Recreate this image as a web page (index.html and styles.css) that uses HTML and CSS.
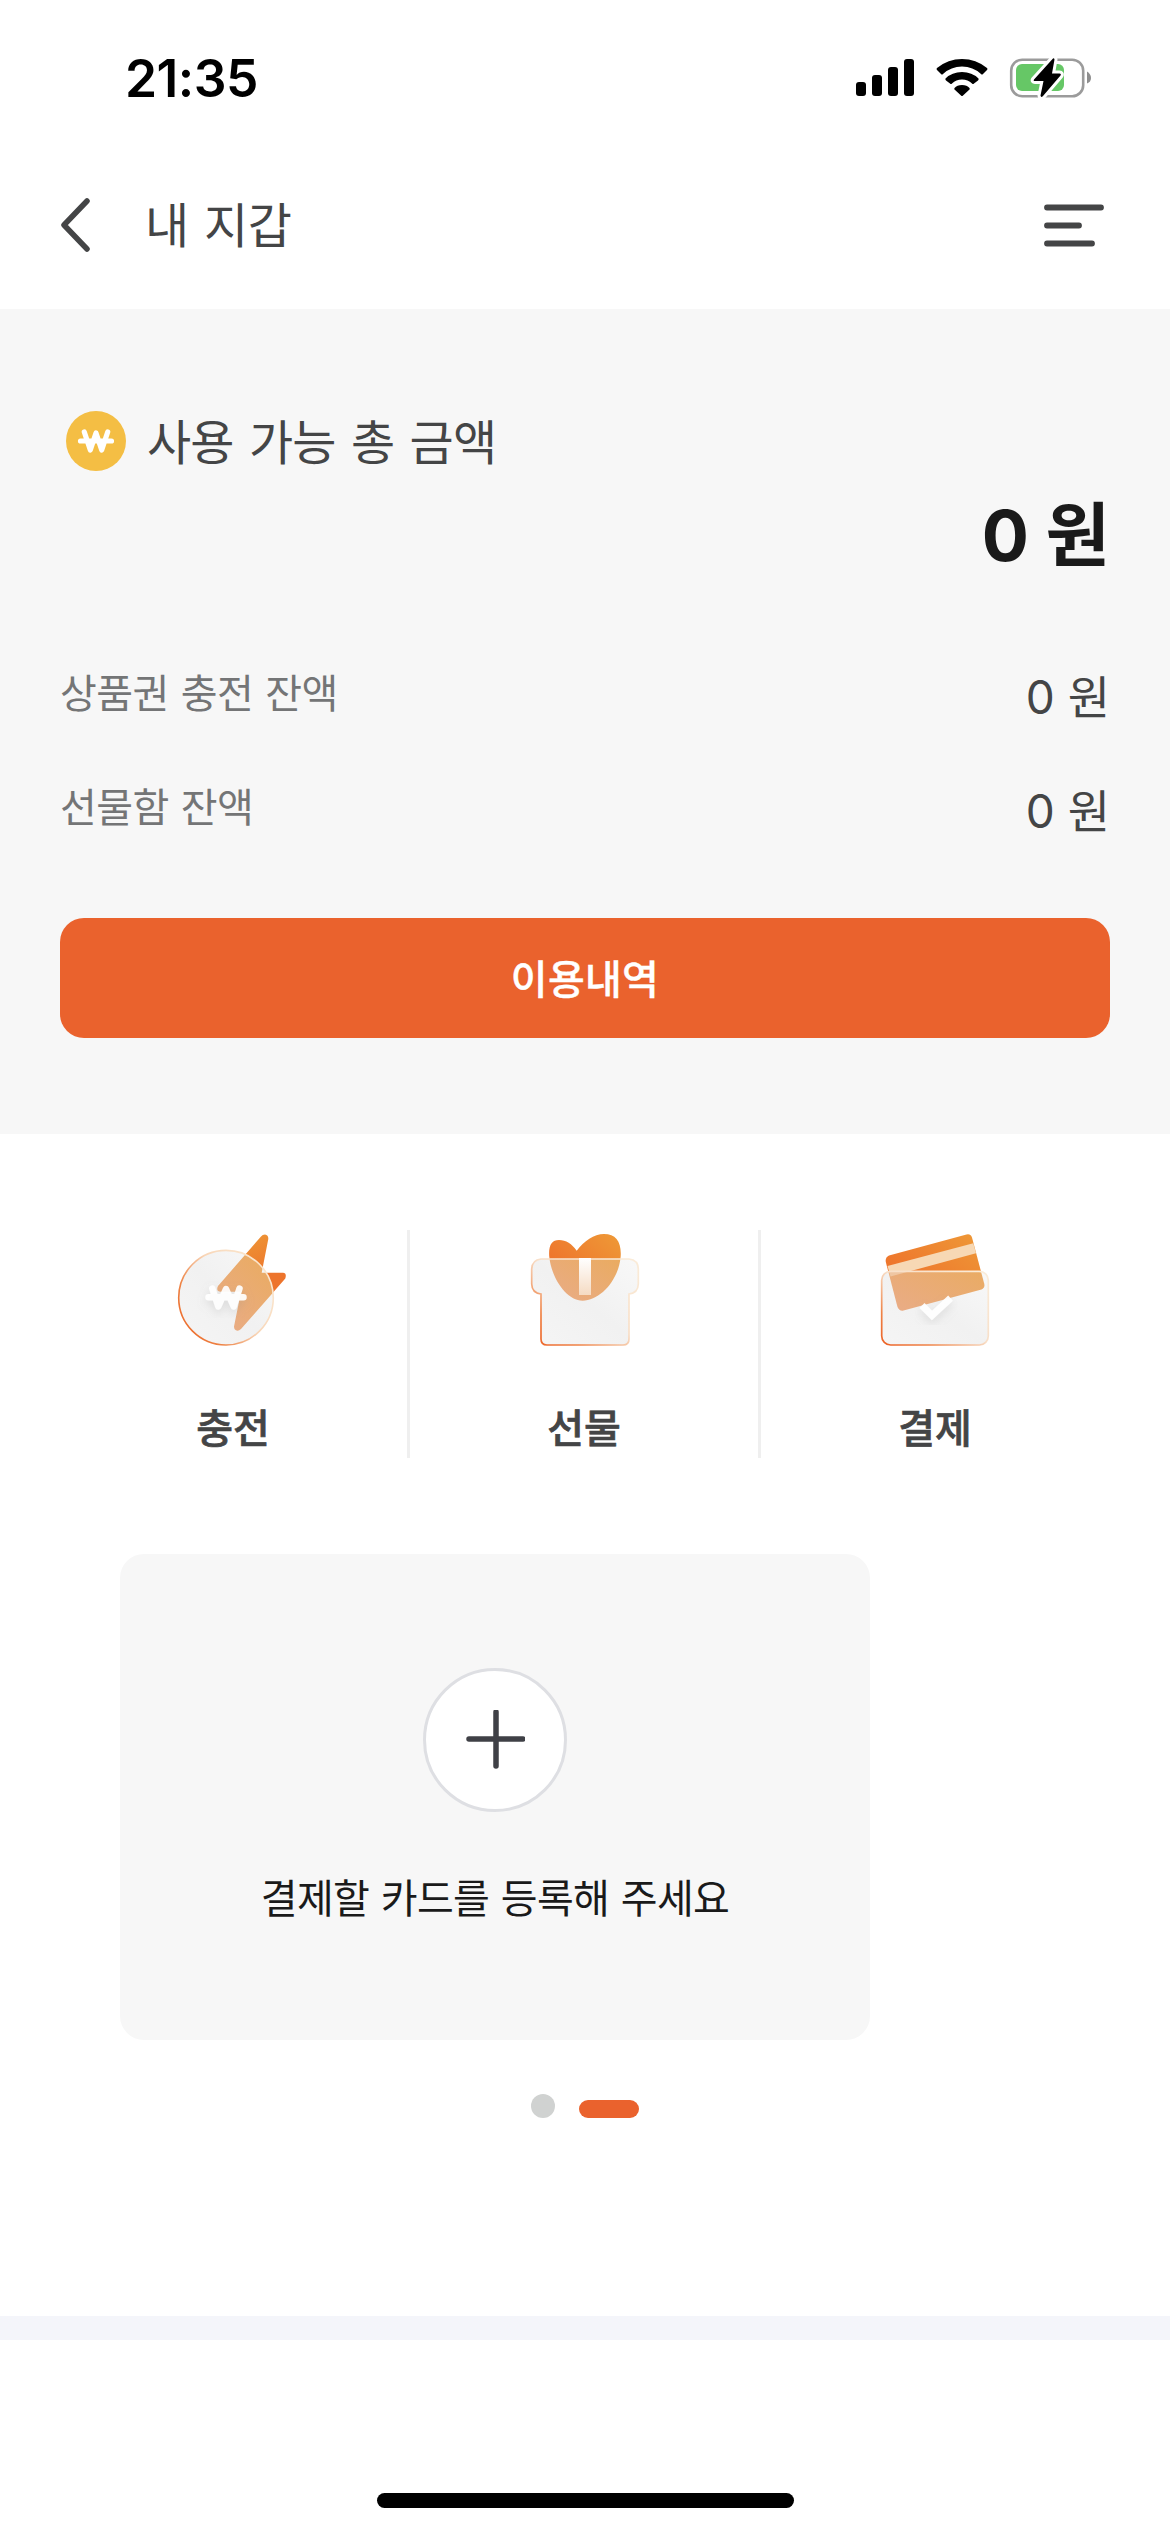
FILE: index.html
```html
<!DOCTYPE html>
<html lang="ko">
<head>
<meta charset="utf-8">
<title>내 지갑</title>
<link rel="stylesheet" href="styles.css">
</head>
<body>
<div class="status">
  <span class="time">21:35</span>
  <svg class="signal" width="58" height="38" viewBox="0 0 58 38"><rect x="0" y="23" width="10" height="14" rx="3"/><rect x="16" y="16" width="10" height="21" rx="3"/><rect x="32" y="8" width="10" height="29" rx="3"/><rect x="48" y="0" width="10" height="37" rx="3"/></svg>
  <svg class="wifi" width="52" height="38" viewBox="0 0 52 38">
    <path d="M1 11Q0 10 1 9Q12 0 26 0T51 9Q52 10 51 11L47 15Q46 16 45 15Q37 7.500 26 7.500T7 15Q6 16 5 15ZM9.500 19.500Q16 13 26 13T42.500 19.500Q43 20.500 42 21.500L38 24.500Q37 25.500 36 24.500Q32 20.500 26 20.500T16 24.500Q15 25.500 14 24.500L10 21.500Q9 20.500 9.500 19.500ZM18.500 29Q21 26 26 26T33.500 29Q34 30 33.500 30.500L27 36.500Q26 37.500 25 36.500L18.500 30.500Q18 30 18.500 29Z"/>
  </svg>
  <svg class="battery" width="84" height="42" viewBox="0 0 84 42">
    <rect x="2.200" y="2.700" width="72" height="36.500" rx="11" fill="none" stroke="#9b9b9b" stroke-width="2.600"/>
    <rect x="7" y="7" width="48" height="27" rx="6" fill="#66c766"/>
    <path d="M78 14.500Q82 17 82 21T78 26.500Z" fill="#8e8e8e"/>
    <path d="M44 1.500L25 22.500Q24 24 26 24H34.500L31.500 38.500Q32 41 34 39L51.500 18.500Q52.500 16.500 50.500 16.500H43L45.500 2.500Q45 .5 44 1.500Z" fill="#000" stroke="#fff" stroke-width="6" paint-order="stroke" stroke-linejoin="round"/>
  </svg>
</div>
<header class="appbar">
  <svg class="back" width="32" height="54" viewBox="0 0 32 54"><path d="M27 3L4 27L27 51" fill="none" stroke="#444546" stroke-width="5.500" stroke-linecap="round" stroke-linejoin="round"/></svg>
  <h1 class="title">내 지갑</h1>
  <svg class="menu" width="60" height="43" viewBox="0 0 60 43"><path d="M3 3.500H57M3 21.500H35M3 39.500H48" stroke="#444546" stroke-width="5.800" stroke-linecap="round"/></svg>
</header>
<section class="summary">
  <div class="total">
    <svg class="coin" width="60" height="60" viewBox="0 0 60 60"><circle cx="30" cy="30" r="30" fill="#f4be44"/><path d="M18.300 21L24.300 39L30 22L35.700 39L41.700 21M14.500 30H45.500" fill="none" stroke="#fff" stroke-width="5.200" stroke-linecap="round" stroke-linejoin="round"/></svg>
    <h2 class="total-label">사용 가능 총 금액</h2>
  </div>
  <p class="total-value">0 원</p>
  <div class="row"><span class="row-label">상품권 충전 잔액</span><span class="row-value">0 원</span></div>
  <div class="row"><span class="row-label">선물함 잔액</span><span class="row-value">0 원</span></div>
  <a class="history">이용내역</a>
</section>
<nav class="actions">
  <a class="action">
    <svg class="art" width="120" height="120" viewBox="0 0 120 120">
      <defs>
        <linearGradient id="orange" x1="0" y1="1" x2="1" y2="0"><stop offset="0" stop-color="#ee702b"/><stop offset=".35" stop-color="#ee772d"/><stop offset="1" stop-color="#ee9a37"/></linearGradient>
        <linearGradient id="orangeDown" x1="0" y1="0" x2=".3" y2="1"><stop offset="0" stop-color="#ee9e38"/><stop offset=".6" stop-color="#ed742c"/></linearGradient>
        <linearGradient id="edge" x1="0" y1="1" x2="1" y2="0"><stop offset="0" stop-color="#ec6226"/><stop offset=".22" stop-color="#ef8347"/><stop offset=".52" stop-color="#f8dfc8"/><stop offset="1" stop-color="#faecd9"/></linearGradient>
        <linearGradient id="edgeRound" x1="0" y1=".8" x2=".9" y2=".2"><stop offset="0" stop-color="#ec6a2a"/><stop offset=".25" stop-color="#ee8446"/><stop offset=".6" stop-color="#f8d6b8"/><stop offset="1" stop-color="#fae6ce"/></linearGradient>
        <linearGradient id="glass" x1="1" y1="0" x2="0" y2="1"><stop offset="0" stop-color="#f8f8f8"/><stop offset=".5" stop-color="#f1f1f1"/><stop offset="1" stop-color="#f5f5f5"/></linearGradient>
        <linearGradient id="fade" x1="0" y1="1" x2=".7" y2="0"><stop offset="0" stop-color="#e9ac88"/><stop offset="1" stop-color="#eaab5b"/></linearGradient>
        <linearGradient id="ribbon" x1="0" y1="0" x2="0" y2="1"><stop offset="0" stop-color="#fff"/><stop offset="1" stop-color="#f5dbc3"/></linearGradient>
        <filter id="shade" x="-40%" y="-40%" width="180%" height="200%"><feDropShadow dx="0" dy="4" stdDeviation="4" flood-color="#999" flood-opacity=".25"/></filter>
        <clipPath id="coinClip"><circle cx="53" cy="66.700" r="47.300"/></clipPath>
        <path id="flash" d="M88 5.500L45 55Q42.500 60.500 48 60.800H68L61 95.500Q61 99.500 64.500 99.700Q66 99.800 68 98L112.300 47.500Q114 42 110 41.700H88.700L95.300 8Q95.500 4 92 3.500Q89.500 3.500 88 5.500Z"/>
      </defs>
      <use href="#flash" fill="url(#orangeDown)"/>
      <circle cx="53" cy="66.700" r="47.300" fill="url(#glass)"/>
      <use href="#flash" fill="url(#fade)" clip-path="url(#coinClip)"/>
      <circle cx="53" cy="66.700" r="47.300" fill="none" stroke="url(#edgeRound)" stroke-width="1.600"/>
      <path d="M39.300 57.500L45.300 75.500L53 58L60.700 75.500L66.500 57.500M35.500 66.300H70.500" fill="none" stroke="#fff" stroke-opacity=".92" stroke-width="6.500" stroke-linecap="round" stroke-linejoin="round" filter="url(#shade)"/>
    </svg>
    <span class="action-label">충전</span>
  </a>
  <a class="action">
    <svg class="art" width="120" height="120" viewBox="0 0 120 120">
      <defs>
        <clipPath id="boxClip"><rect x="7" y="27.700" width="108" height="90"/></clipPath>
        <path id="heart" d="M52.700 19.700C60 10 70 3 80 3C92 3 97.500 11 96.700 25C95 49 76 69.700 58.700 69.700C42 69.700 27 46 25.200 25C24.500 14 28 9 35 9C42 9 48 13 52.700 19.700Z"/>
        <path id="box" d="M17 28H105Q114.300 29 114.300 38V53Q114 62 105 63V108Q105 114 99 114H23Q17 114 17 108V63Q8 62 7.700 53V38Q8 29 17 28Z"/>
      </defs>
      <use href="#heart" fill="url(#orange)"/>
      <use href="#box" fill="url(#glass)"/>
      <use href="#heart" fill="url(#fade)" clip-path="url(#boxClip)"/>
      <use href="#box" fill="none" stroke="url(#edge)" stroke-width="1.700"/>
      <rect x="55" y="27" width="12" height="37" fill="url(#ribbon)"/>
    </svg>
    <span class="action-label">선물</span>
  </a>
  <a class="action">
    <svg class="art" width="120" height="120" viewBox="0 0 120 120">
      <defs>
        <clipPath id="walletClip"><rect x="6.700" y="40.300" width="106.600" height="73.700" rx="9"/></clipPath>
        <path id="pay" d="M14 24.500L91.500 3.500Q95.500 2.500 97 6.500L109.300 53Q110 57 106.500 58.500L28.500 79.500Q24.500 80.500 22.500 76L10.800 31Q10 26.500 14 24.500Z"/>
        <path id="stripe" d="M12.500 35L98.300 12.300L101 22.300L15.500 45.500Z"/>
      </defs>
      <use href="#pay" fill="url(#orange)"/>
      <use href="#stripe" fill="#f7d8b4"/>
      <rect x="6.700" y="40.300" width="106.600" height="73.700" rx="9" fill="url(#glass)"/>
      <g clip-path="url(#walletClip)"><use href="#pay" fill="url(#fade)"/><use href="#stripe" fill="#efc6a2"/></g>
      <rect x="6.700" y="40.300" width="106.600" height="73.700" rx="9" fill="none" stroke="url(#edge)" stroke-width="1.700"/>
      <path d="M49.500 77L57 84.500L73 69.500" fill="none" stroke="#fff" stroke-opacity=".94" stroke-width="7" stroke-linecap="square" filter="url(#shade)"/>
    </svg>
    <span class="action-label">결제</span>
  </a>
</nav>
<section class="card">
  <div class="add"><svg width="60" height="60" viewBox="-1 1 60 60"><path d="M30 3V57M3 30H57" stroke="#3f4046" stroke-width="5.500" stroke-linecap="round"/></svg></div>
  <p class="card-text">결제할 카드를 등록해 주세요</p>
</section>
<div class="pager"><span class="dot"></span><span class="pill"></span></div>
<div class="band"></div>
<div class="home"></div>
</body>
</html>
```
FILE: styles.css
```css
* { box-sizing: border-box; }
body { margin: 0; width: 1170px; height: 2532px; overflow: hidden; background: #fff; color: #444546; font-family: "Noto Sans CJK KR", sans-serif; display: flex; flex-direction: column; }
h1, h2, p { margin: 0; font-weight: 400; }
svg { display: block; flex: none; }
.status { height: 141px; padding: 57px 77px 0 125px; display: flex; align-items: flex-start; color: #000; }
.time { font: 600 51.500px/42px "Inter", sans-serif; letter-spacing: -.5px; margin-right: auto; }
.signal { margin: 2px 22px 0 0; }
.wifi { margin: 2px 21px 0 0; }
.appbar { height: 168px; padding: 0 66px 0 60px; display: flex; align-items: center; }
.title { font-size: 48px; line-height: 60px; letter-spacing: -.5px; word-spacing: 2.500px; margin: 0 auto 6px 53px; }
.summary { height: 825px; padding: 97px 60px 0; background: #f7f7f7; }
.total { height: 70px; display: flex; align-items: center; gap: 21px; padding-left: 6px; }
.total-label { font-size: 48px; line-height: 66px; letter-spacing: -.8px; word-spacing: 2.600px; margin-bottom: 5px; }
.total-value { font: 700 70px/90px "Inter", "Noto Sans CJK KR", sans-serif; color: #1a1a1a; text-align: right; margin: 15px 0 54px; }
.row { height: 114px; display: flex; align-items: center; justify-content: space-between; }
.row-label { font-size: 40px; line-height: 60px; letter-spacing: -.600px; word-spacing: 1.500px; color: #747576; margin-bottom: 3px; }
.row-value { font: 400 46px/60px "Inter", "Noto Sans CJK KR", sans-serif; margin-top: 9px; }
.history { display: flex; align-items: center; justify-content: center; height: 120px; margin-top: 55px; padding-bottom: 3px; border-radius: 24px; background: #ea622d; color: #fff; font-size: 40px; font-weight: 500; letter-spacing: .3px; -webkit-text-stroke: .4px; }
.actions { display: flex; height: 228px; margin: 96px 58px 0 59px; }
.action { flex: none; width: 351px; display: flex; flex-direction: column; align-items: center; border-right: 3px solid #efefef; }
.action:last-child { border-color: transparent; }
.art { margin-top: 1px; }
.action-label { font-size: 40px; line-height: 60px; font-weight: 500; margin-top: 45px; -webkit-text-stroke: .7px; }
.card { width: 750px; height: 486px; margin: 96px 0 0 120px; border-radius: 24px; background: #f7f7f7; display: flex; flex-direction: column; align-items: center; padding-top: 114px; }
.add { width: 144px; height: 144px; border: 3px solid #dedfe3; border-radius: 50%; background: #fff; display: flex; align-items: center; justify-content: center; }
.card-text { font-size: 40px; line-height: 60px; letter-spacing: -.600px; word-spacing: .8px; color: #1a1a1a; margin-top: 54px; }
.pager { height: 24px; margin-top: 54px; display: flex; align-items: flex-end; justify-content: center; gap: 24px; }
.dot { width: 24px; height: 24px; border-radius: 50%; background: #d0d2d1; }
.pill { width: 60px; height: 18px; border-radius: 9px; background: #ea622d; }
.band { height: 24px; margin-top: 198px; background: #f4f5fa; }
.home { width: 417px; height: 15px; margin: 153px auto 0; border-radius: 8px; background: #000; }
```
